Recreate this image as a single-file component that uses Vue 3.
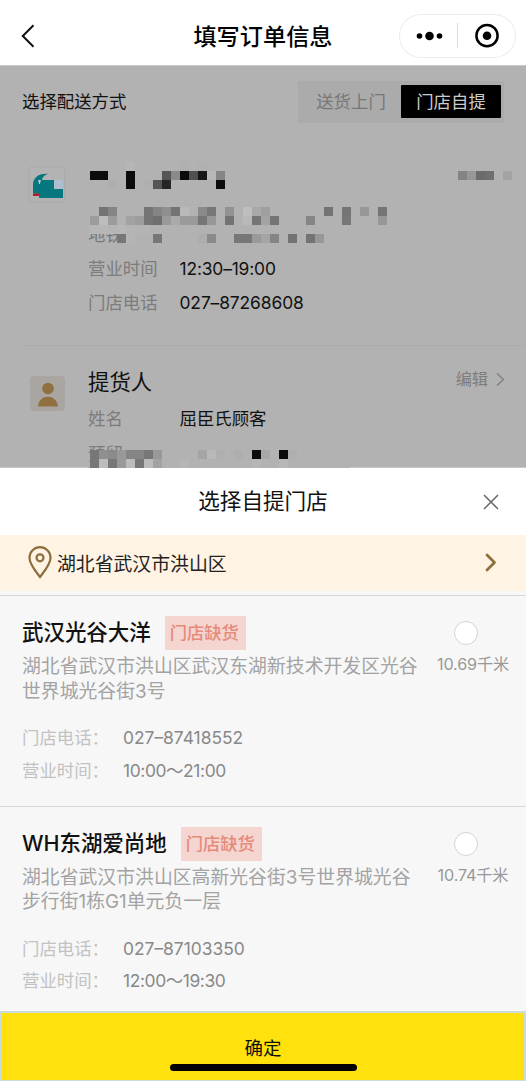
<script setup>
const stores = [
  {
    name: '武汉光谷大洋',
    address: ['湖北省武汉市洪山区武汉东湖新技术开发区光谷', '世界城光谷街3号'],
    phone: '027–87418552',
    hours: '10:00～21:00',
    distance: '10.69',
  },
  {
    name: 'WH东湖爱尚地',
    address: ['湖北省武汉市洪山区高新光谷街3号世界城光谷', '步行街1栋G1单元负一层'],
    phone: '027–87103350',
    hours: '12:00～19:30',
    distance: '10.74',
  },
]

// Privacy mosaic: each row is [top, [left, shade], ...] on a 9px grid
const rows = [
  [162, [126, '#b6b6b6'], [180, '#b0b0b0'], [198, '#b0b0b0']],
  [171, [90, '#0c0c0c'], [99, '#0c0c0c'], [126, '#0c0c0c'], [162, '#555'], [171, '#8a8a8a'], [180, '#0b0b0b'], [189, '#505050'], [198, '#161616'], [207, '#b8b8b8'], [216, '#858585'], [458, '#848484'], [467, '#979797'], [476, '#6b6b6b'], [485, '#6f6f6f'], [503, '#a3a3a3']],
  [180, [108, '#afafaf'], [126, '#0c0c0c'], [144, '#afafaf'], [153, '#555'], [162, '#252525'], [216, '#0c0c0c']],
  [207, [99, '#737373'], [108, '#858585'], [144, '#757575'], [153, '#848484'], [162, '#8f8f8f'], [171, '#737373'], [180, '#b9b9b9'], [198, '#8a8a8a'], [207, '#777'], [225, '#929292'], [243, '#bebebe'], [252, '#a9a9a9'], [261, '#9f9f9f'], [324, '#737373'], [342, '#757575'], [360, '#979797'], [378, '#757575']],
  [216, [90, '#9c9c9c'], [99, '#bdbdbd'], [108, '#9c9c9c'], [126, '#a3a3a3'], [135, '#9d9d9d'], [144, '#757575'], [153, '#6f6f6f'], [162, '#9a9a9a'], [171, '#aaa'], [180, '#9a9a9a'], [189, '#9a9a9a'], [198, '#757575'], [207, '#979797'], [225, '#737373'], [243, '#b9b9b9'], [252, '#757575'], [261, '#a3a3a3'], [270, '#757575'], [306, '#858585'], [342, '#777'], [378, '#979797']],
  [225, [90, '#b7b7b7'], [99, '#b7b7b7'], [108, '#b5b5b5'], [117, '#b7b7b7'], [126, '#b4b4b4']],
  [234, [117, '#777'], [126, '#b5b5b5'], [153, '#777'], [198, '#adadad'], [207, '#8a8a8a'], [234, '#777'], [243, '#777'], [252, '#999'], [261, '#a5a5a5'], [270, '#858585'], [288, '#737373'], [306, '#737373'], [315, '#979797']],
  [450, [90, '#777'], [99, '#8f8f8f'], [108, '#8a8a8a'], [117, '#999'], [126, '#858585'], [135, '#858585'], [144, '#777'], [153, '#999'], [198, '#a5a5a5'], [207, '#b9b9b9'], [216, '#afafaf'], [234, '#aeaeae'], [252, '#0c0c0c'], [261, '#a8a8a8'], [279, '#0c0c0c'], [288, '#afafaf']],
  [459, [90, '#777'], [99, '#bcbcbc'], [108, '#777'], [117, '#999'], [126, '#bcbcbc'], [135, '#777'], [144, '#bcbcbc'], [153, '#a3a3a3'], [180, '#b6b6b6'], [252, '#b6b6b6'], [279, '#b8b8b8']],
]
const tiles = rows.flatMap(([y, ...cells]) => cells.map(([x, fill]) => ({ x, y, fill })))
</script>

<template>
  <div class="screen">
    <header class="nav">
      <svg class="back" width="14" height="24" viewBox="0 0 14 24"><path d="M12.5 1.2 1.8 12l10.7 10.8" /></svg>
      <h1>填写订单信息</h1>
      <div class="capsule">
        <svg width="117" height="44" viewBox="0 0 117 44">
          <circle cx="20.5" cy="22" r="2.8" /><circle cx="30.5" cy="22" r="4.3" /><circle cx="40.5" cy="22" r="2.8" />
          <path d="M58.500 9v25" stroke="#dedede" />
          <circle cx="88" cy="21.7" r="10.6" fill="none" stroke="#000" stroke-width="2.5" />
          <circle cx="88" cy="21.7" r="4.3" />
        </svg>
      </div>
    </header>

    <main class="order">
      <section class="delivery">
        <span class="lbl">选择配送方式</span>
        <div class="segment"><span class="seg">送货上门</span><span class="seg on">门店自提</span></div>
      </section>

      <section class="shop">
        <svg class="logo" width="38" height="38" viewBox="0 0 38 38">
          <rect x=".8" y=".8" width="36" height="35.4" rx="4" fill="#b3b3b3" stroke="#a9aaaa" />
          <path d="M5 27.500V19C5 12 10 7 20 7.700c-4 1.500-5.500 3.500-6 6.300h12v9h9v9H11v-4z" fill="#07777f" />
          <rect x="26" y="14" width="9" height="9" fill="#afbecf" />
          <path d="M10.200 14h2.600l-.9 4h-.8z" fill="#c8cece" />
          <path d="M5 27.500h6v2.500H5z" fill="#b61c22" />
        </svg>
        <div class="rows">
          <p class="metro">地铁</p>
          <p class="row"><span class="key">营业时间</span><span class="num">12:30–19:00</span></p>
          <p class="row"><span class="key">门店电话</span><span class="num phone">027–87268608</span></p>
        </div>
      </section>

      <section class="pickup">
        <svg class="avatar" width="35" height="35" viewBox="0 0 35 35">
          <rect width="35" height="35" rx="4" fill="#a9a6a2" />
          <circle cx="18" cy="12.500" r="5.800" fill="#906f40" />
          <path d="M8 30.500c1-13 18.500-13 20 0z" fill="#906f40" />
        </svg>
        <div class="rows">
          <h2>提货人</h2>
          <p class="row"><span class="key">姓名</span><span>屈臣氏顾客</span></p>
          <p class="row"><span class="key">预留</span></p>
        </div>
        <div class="edit">
          <span>编辑</span>
          <svg width="9" height="15" viewBox="0 0 9 15"><path d="M1 1.500 7.500 7.500 1 13.500" /></svg>
        </div>
      </section>
      <svg class="mosaic" width="526" height="402" viewBox="0 66 526 402" shape-rendering="crispEdges">
        <rect x="88" y="225" width="62" height="9" fill="#b4b4b4" />
        <rect x="90" y="450" width="72" height="18" fill="#b2b2b2" />
        <rect v-for="(t, i) in tiles" :key="i" :x="t.x" :y="t.y" width="9" height="9" :fill="t.fill" />
        <path d="M0 467.500h88M350 467.500h176" stroke="#c8c8c8" />
      </svg>
    </main>

    <div class="sheet">
      <div class="sheet-title">
        <h2>选择自提门店</h2>
        <svg class="close" width="16" height="16" viewBox="0 0 16 16"><path d="M1 1l14 14M15 1 1 15" /></svg>
      </div>
      <div class="place">
        <svg class="pin" width="24" height="33" viewBox="0 0 24 33">
          <path d="M12 31C8 25.500 1.500 18.500 1.500 11.700a10.500 10.500 0 0 1 21 0C22.500 18.500 16 25.500 12 31z" />
          <circle cx="12" cy="11.800" r="3.500" />
        </svg>
        <span>湖北省武汉市洪山区</span>
        <svg class="go" width="12" height="19" viewBox="0 0 12 19"><path d="M2 2l7.500 7.500L2 17" /></svg>
      </div>

      <article v-for="s in stores" :key="s.name" class="store">
        <div class="info">
          <div class="head"><h3>{{ s.name }}</h3><span class="tag">门店缺货</span></div>
          <p v-for="line in s.address" :key="line" class="addr">{{ line }}</p>
          <div class="contact">
            <p><span>门店电话：</span><b>{{ s.phone }}</b></p>
            <p><span>营业时间：</span><b class="hours">{{ s.hours }}</b></p>
          </div>
        </div>
        <div class="pick"><i class="radio"></i><span class="dist">{{ s.distance }}千米</span></div>
      </article>
    </div>

    <footer class="confirm"><span>确定</span><i class="home"></i></footer>
  </div>
</template>

<style>
body { margin: 0; }
</style>

<style scoped>
.screen {
  width: 526px; height: 1081px; overflow: hidden; display: flex; flex-direction: column;
  font-family: Inter, "Noto Sans CJK SC", sans-serif; font-size: 17.4px; color: #111; background: #fff;
}
h1, h2, h3, p { margin: 0; font-weight: 400; white-space: nowrap; }
svg { display: block; flex: none; }

.nav { height: 66px; box-sizing: border-box; border-bottom: 1px solid #c9c9c9; display: grid; grid-template-columns: 171px 1fr 171px; align-items: center; padding-top: 7px; }
.back { margin-left: 21px; fill: none; stroke: #111; stroke-width: 2; }
h1 { font-size: 23.2px; font-weight: 500; line-height: 32px; padding-top: 2px; text-align: center; color: #000; }
.capsule { margin-left: 44px; width: 117px; height: 44px; box-sizing: border-box; border-radius: 22px; box-shadow: inset 0 0 0 1px #ececec; }

.order { height: 402px; position: relative; background: #b2b2b2; overflow: hidden; }
.mosaic { position: absolute; left: 0; top: 0; }
.delivery { height: 42px; padding: 15px 22px 0; display: flex; align-items: center; justify-content: space-between; }
.lbl { padding-bottom: 3px; }
.segment { width: 206px; height: 42px; box-sizing: border-box; padding: 4px 3px 5px 3px; display: flex; background: #ababab; }
.seg { flex: 1; text-align: center; line-height: 33px; color: #777; }
.seg.on { flex: none; width: 100px; background: #000; color: #ccc; border-radius: 1px; }

.shop { margin: 0 0 0 22px; height: 222px; border-bottom: 1px solid #acacac; display: flex; }
.logo { margin: 43px 0 0 6px; }
.rows { margin-left: 22px; }
.metro { margin-top: 99px; line-height: 26px; font-size: 17.4px; color: #777; }
.row { display: flex; line-height: 34px; height: 34px; }
.shop .row:nth-child(2) { margin-top: 4px; }
.key { width: 91.500px; color: #7c7c7c; }
.num { letter-spacing: -.15px; }
.num.phone { letter-spacing: -.1px; }

.pickup { display: flex; padding-left: 30px; }
.avatar { margin-top: 30px; }
.pickup .rows { margin-left: 23px; flex: 1; }
.pickup h2 { margin-top: 20px; height: 36px; line-height: 32px; font-size: 21.400px; }
.pickup .row:last-child { margin-top: 1px; }
.edit { margin: 21px 21px 0 0; height: 24px; display: flex; align-items: center; gap: 8px; font-size: 16.200px; line-height: 24px; color: #7c7c7c; }
.edit svg { fill: none; stroke: #7c7c7c; stroke-width: 1.300; }

.sheet { flex: none; height: 543px; background: #f7f7f7; }
.sheet-title { height: 67px; background: #fff; display: grid; grid-template-columns: 60px 1fr 60px; align-items: center; }
.sheet-title h2 { grid-column: 2; text-align: center; font-size: 21.600px; line-height: 64px; height: 66px; color: #111; }
.close { margin-left: 17px; fill: none; stroke: #666; stroke-width: 1.500; }
.place { height: 56px; box-sizing: border-box; margin-bottom: 4px; padding: 0 29px 0 28px; display: flex; align-items: center; background: #fff3e4; font-size: 18.850px; color: #222; }
.place span { padding-bottom: 2px; }
.pin { margin-right: 5px; margin-top: -1px; fill: none; stroke: #8d6f3e; stroke-width: 2.200; }
.go { margin-left: auto; margin-top: -2px; fill: none; stroke: #8d6f3e; stroke-width: 2.800; stroke-linecap: round; stroke-linejoin: round; }

.store { height: 210.500px; box-sizing: border-box; border-top: 1.500px solid #d8d8d8; padding: 20px 0 0 22px; display: flex; justify-content: space-between; }
.head { display: flex; align-items: center; height: 34px; gap: 14px; }
h3 { font-size: 21.500px; font-weight: 500; line-height: 32px; padding-bottom: 2px; letter-spacing: -.05px; color: #111; }
.tag { width: 81px; height: 34px; line-height: 34px; box-sizing: border-box; padding-left: 5px; background: #f4d5d0; color: #e68a7b; font-weight: 500; font-size: 17.300px; white-space: nowrap; }
.addr { font-size: 18.850px; line-height: 24.500px; color: #a3a3a3; }
.head + .addr { margin-top: 5px; }
.contact { margin-top: 18px; }
.contact p { display: flex; line-height: 32.500px; height: 32.500px; }
.contact span { width: 101px; color: #c2c2c2; }
.contact b { font-weight: 400; color: #888; }
.contact .hours { letter-spacing: -.38px; }
.pick { width: 72px; margin: 4px 17px 0 0; display: flex; flex-direction: column; align-items: center; }
.radio { width: 24px; height: 24px; margin: 1px 14px 0 0; box-sizing: border-box; border: 1px solid #d4d4d4; border-radius: 50%; background: #fff; }
.dist { margin-top: 7px; line-height: 24px; font-size: 16.200px; letter-spacing: -.15px; color: #999; white-space: nowrap; }

.confirm { flex: 1; box-sizing: border-box; border: 2px solid #c9dbda; border-width: 2px 2px 1px; background: #ffe10d; display: flex; flex-direction: column; align-items: center; padding-top: 21px; font-size: 18.500px; line-height: 28px; color: #111; }
.home { margin-top: 2px; width: 187px; height: 7px; border-radius: 4px; background: #000; flex: none; }
</style>
